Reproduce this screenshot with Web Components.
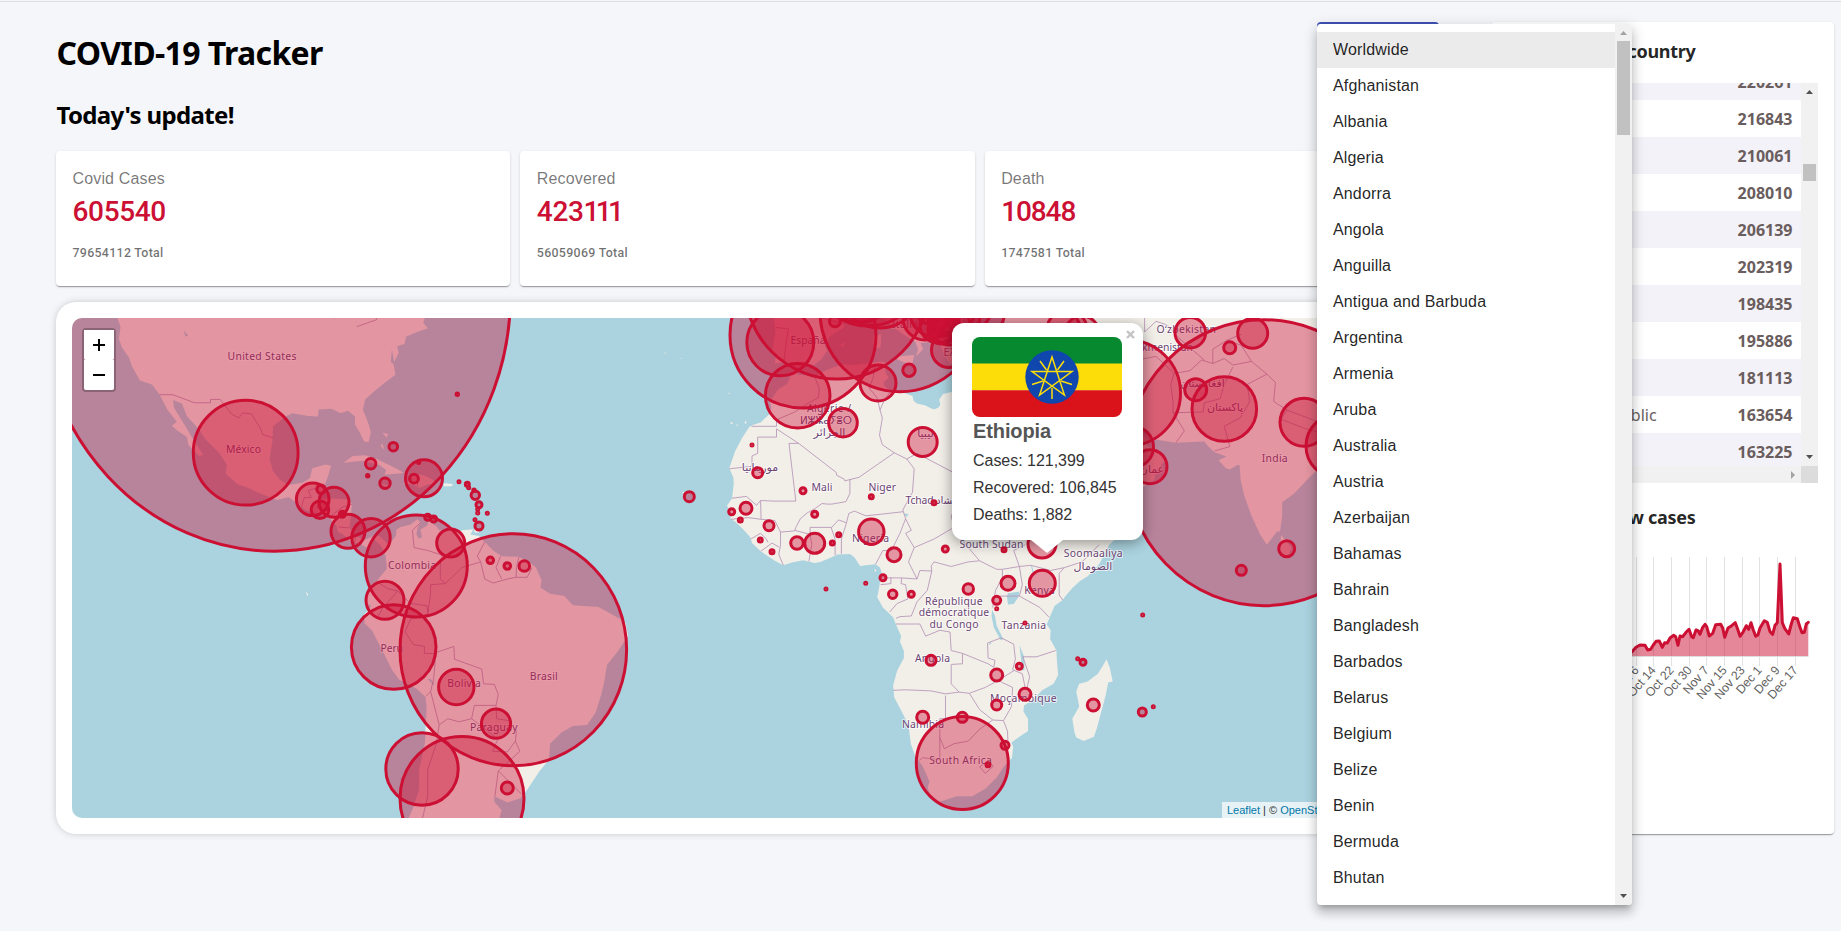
<!DOCTYPE html>
<html lang="en">
<head>
<meta charset="utf-8">
<title>COVID-19 Tracker</title>
<style>
html,body{margin:0;padding:0;height:100%;overflow:hidden}
body{background:#f5f6fa;font-family:"Noto Sans","Liberation Sans",sans-serif}
</style>
</head>
<body>
<covid-app></covid-app>
<script>
const define=(name,html,init)=>{
  const t=document.createElement('template');t.innerHTML=html;
  customElements.define(name,class extends HTMLElement{
    constructor(){super();this.attachShadow({mode:'open'}).append(t.content.cloneNode(true));}
    connectedCallback(){if(init&&!this.ready){this.ready=true;init(this,this.shadowRoot);}}
  });
};
// Web Mercator at zoom 3
const R=2048/360, K=1024/Math.PI;
const px=lon=>826+R*lon, py=lat=>590.4-K*Math.log(Math.tan(Math.PI/4+lat*Math.PI/360));
const path=(s,close)=>s.trim().split('|').map(seg=>'M'+seg.trim().split(/\s+/).map(p=>{const[a,b]=p.split(',').map(Number);return px(a).toFixed(1)+' '+py(b).toFixed(1)}).join('L')+(close?'Z':'')).join('');

const LAND=`-5.9,35.8 -5.3,35.9 -5,35.4 -3,35.3 -2,35.1 -1,35.7 0,36 1.5,36.5 3,36.9 5,36.8 7,37 9.8,37.3 11,37 10.3,36.5 10.6,35.5 11,35 10.1,34.3 10.3,33.7 11.2,33.2 12.3,32.8 13.3,32.9 15.2,32.3 15.4,31.6 16,31.2 17.5,30.9 18.3,30.5 19,30.3 19.8,30.6 20.1,31 19.9,31.8 20.6,32.6 22,32.9 23.2,32.3 25,31.6 34,31.3 35,12 51,11.8 50.8,9 49.8,8 48.9,6.2 48,4.6 46,2.5 44.6,1.6 43.4,.5 42.5,-.5 41.5,-1.8 40.2,-2.7 39.5,-4.3 38.8,-6 39.5,-7 39.4,-8.5 40.5,-10.5 40.6,-12.5 40.8,-14.7 40,-16.2 38,-17.3 36.5,-18.8 34.8,-19.8 34.7,-20.8 35.5,-22 35.5,-24 34,-24.9 32.6,-25.8 32.9,-26.5 32.7,-28.2 31.3,-29.5 30,-31.2 28,-32.9 25.7,-34 23,-34 20,-34.8 18.4,-34.3 17.9,-32.7 18.2,-31.8 17,-29.5 15.7,-28 14.9,-26 14.5,-23 13.4,-21 12,-18.5 11.8,-16.5 12.5,-14 13.7,-11.8 13.7,-10.6 13,-9 13.2,-8 12.3,-6 11.8,-4.7 10,-3 9,-1.2 9.3,.2 9.5,1.5 9.8,3 9.5,4 8.7,4.6 7,4.4 6,4.3 5,5.8 4.2,6.4 2,6.3 1,5.8 -1,5 -2,4.8 -4,5.3 -6,4.9 -7.5,4.4 -9,5.2 -11.4,6.8 -13,8.3 -13.3,9.3 -14.7,10.8 -16,12 -16.8,12.5 -16.7,13.5 -17.4,14.7 -16.5,16 -16.2,18.5 -16.3,19.5 -17,21 -16,23.7 -14.8,25.8 -13.5,27.6 -12.9,27.9 -11.5,28.3 -10,29.5 -9.6,30.5 -9.8,31.5 -8.5,33.2 -6.8,34.1
|-77.4,8.5 -76.8,8 -75.6,9.5 -75.5,10.6 -74.8,11.1 -73,11.5 -71.8,12.4 -71.3,11.8 -71.8,10.9 -72,9.8 -71.6,9.1 -71,9.3 -71.3,10.6 -70,11.4 -70,12.1 -68.5,11.2 -68,10.5 -66,10.5 -65,10.1 -64,10.5 -62,10.7 -62.5,9.8 -61,9.5 -60,8.5 -58.5,7 -57,6 -54,5.9 -52,4.8 -51,4 -50,1.8 -50.2,.5 -48.5,-.6 -46,-1 -44.5,-2.6 -42,-2.8 -40,-2.9 -38,-4 -36,-5.1 -35.2,-5.8 -34.8,-8 -36.5,-10.5 -38.5,-13 -39,-16 -39.5,-18 -40.5,-21 -42,-23 -44.5,-23.2 -46.5,-24.2 -48.5,-26 -48.7,-28.5 -50.3,-30.2 -52.5,-33 -53.8,-34.3 -56,-34.9 -58.3,-34 -58.3,-34.8 -57,-36 -57.7,-37.8 -57.7,-40 -74,-40 -73.3,-37 -72.5,-35.5 -71.5,-33 -71.5,-30 -70.5,-26 -70.2,-20 -70.4,-18.4 -72,-17 -75,-15.5 -76.3,-13.8 -77.2,-12 -78.5,-9.5 -79.8,-7 -81.1,-5.8 -81.2,-4.2 -80.3,-3.4 -80,-2.7 -80.9,-2.2 -80.8,-1 -80,.5 -79,1.5 -78.7,2 -77.2,3.8 -77.4,6 -77.9,7.2 -78.4,8 -79.5,9 -80.3,8.3 -80.5,7.4 -82,8.2 -83,8.3 -83.7,8.7 -85,9.9 -85.8,10.2 -86,11.2 -87.5,12.9 -89,13.3 -91.5,14 -93,15.2 -94.5,16.2 -96.5,15.7 -99,16.6 -101.8,17.8 -103.5,18.4 -105.5,20.1 -105.3,21.5 -106.5,23.3 -109,25.6 -110.5,27.5 -112.3,29.2 -113.2,31.2 -114.8,31.7 -114.6,30.5 -112.8,28 -111.5,26 -110.3,24.3 -109.5,23.2 -110.2,23 -112.1,24.8 -112.3,26 -114,27 -115,27.8 -114.1,28.4 -115.8,30.3 -117.1,32.5 -118.5,34 -120.6,34.6 -122,36.6 -122.5,37.8 -123.8,39.3 -124.3,40.4 -124,42 -124.5,43 -124,45 -70,45 -70.5,43.2 -70.8,42.5 -70,41.8 -71.5,41.4 -73.8,40.7 -74.1,39.7 -75.4,39.4 -75.1,38.5 -75.9,37.2 -76.3,38.9 -76.5,37.2 -76,36.9 -75.7,35.4 -77.5,34.3 -79,33.3 -81,31.8 -81.4,30.3 -80.5,28.3 -80,26.8 -80.4,25.2 -81.2,25.3 -82,26.8 -82.8,28 -82.8,29.2 -84,30.1 -85.3,29.7 -87,30.4 -89.2,30.3 -89.3,29.2 -91,29.3 -93.8,29.7 -95,29.2 -97.2,27.7 -97.3,25.5 -97.8,22.5 -97.2,20.5 -96,19.1 -94.5,18.2 -92,18.6 -90.7,19.4 -90.3,21 -88,21.6 -87,21.4 -87.6,19.5 -88.2,18 -88.9,15.9 -86,15.9 -84,15.8 -83.3,15 -83.6,12.5 -83.8,11 -82.5,9.4 -81,8.8 -79.9,9.4 -78.5,9.5
|-84.8,21.9 -83.2,23 -81,23.1 -79,22.5 -77,21.6 -75.6,21 -74.2,20.2 -77.6,19.9 -77.3,20.7 -78.5,21.5 -81.5,22.2|-74.3,18.5 -72.5,18.3 -71.5,17.7 -70,18.3 -68.4,18.5 -69.5,19.3 -71,19.9 -73.2,19.9 -72.6,19|-67.2,18.5 -65.6,18.4 -65.8,18 -67.2,18|-78.3,18.4 -76.3,18.1 -77,17.8|-78,25 -77.6,24 -78.3,24.6|-77,26.5 -77.2,25.9 -78,26.7|-61.8,10.7 -61,10.7 -61,10.1 -61.8,10.1
|49.3,-12 49.9,-13.5 50.4,-15.8 49.6,-16 49.2,-18 48.5,-20.5 47.6,-23.6 47.1,-24.9 45.3,-25.6 44,-25 43.7,-24.3 43.3,-22 44.5,-20 44,-17.5 44.5,-16.2 46,-15.8 47.8,-14.5 48.8,-12.9
|48,30 50,30 51.5,28 54,26.6 56.8,27 57.3,25.7 61.5,25.1 66.5,25.3 67.2,24.5 68.3,23.6 70.4,22.9 69,22.3 70.3,21 71,20.8 72.3,21.5 72.7,21.5 72.9,19 73.5,16.5 74.8,13 76.3,9.8 77.5,8 78.2,8.9 79.3,10.3 79.8,10.3 80.2,13 80.2,15.3 82.2,16.7 85,19.5 87,21.3 90,22 90,45 30,45 35,36
|56.3,26 56.5,24.5 58.6,23.6 59.8,22.5 58,20.5 57.7,19 55.2,17.6 52,16 45,13 43,12.7 35,28 35,31 48,30|80,9.7 81.8,7.5 81.4,6.4 80.8,6 79.8,7
|-9.2,43.2 -8.9,41.5 -9.4,38.8 -8.8,38 -9,37 -7,37.2 -6.3,36.6 -5.5,36 -4.3,36.7 -2,36.8 -.7,37.7 .2,38.8 -.3,39.6 .8,40.8 3.2,41.9 3.1,43.1 6,43 8,45 -9,45|10.3,43 12.3,41.7 14,40.8 15.7,40 16.2,38.9 15.8,38 17.1,39 16.6,39.8 18.4,40 16,41.9 14,42.8 13,45 9,45|12.5,38 15.5,38.2 15.1,36.7 12.5,37.6|8.4,39 9.6,39.2 9.7,41 8.3,40.8|8.6,42 9.4,43 9.4,41.5|2.4,39.6 3.3,39.9 3.1,39.3|15,44 19,42 19.5,40.5 21.7,36.8 24,38 24,45
|-25.1,17.1 -24.9,16.9 -25.3,16.8|-16.8,28.4 -16.3,28.2 -16.7,28|-15.7,28.1 -15.4,27.8 -15.7,27.8|-14.2,28.6 -13.9,28.2 -14.3,28.1|-17.2,32.8 -16.8,32.7 -17.1,32.6|-28.4,38.6 -28,38.4 -28.3,38.4|-25.6,37.8 -25.2,37.7 -25.6,37.7|8.5,3.7 8.9,3.6 8.6,3.2|-91.5,-.1 -91,-.7 -91.2,-1`;
const LAKES=`32,-.5 34,-.2 33.8,-1.2 33,-2.4 32,-2.5 31.8,-1|29.2,-3.4 29.7,-4.5 30,-6.2 31.2,-8.6 30.7,-8.7 29.5,-6.5 29.1,-4.5|34,-9.6 34.8,-11.5 34.9,-13.9 34.4,-13.9 34.3,-12|36,4.5 36.3,3.2 36.7,2.6 36.2,4.4|-88,44 -87,43.3 -86.4,43 -86.3,44|-70,-15.4 -69,-16.4 -68.8,-16.2 -69.5,-15.4|30.8,1.8 31.3,2.2 30.4,1.1|13.6,13.4 14.5,13.3 14.2,12.8|-112.9,41.5 -112.1,40.8 -112.6,40.7|28.9,-9 29.1,-9.3 28.6,-9.6`;
const BORDERS=`-13.1,27.7 -8.7,27.7 -8.7,28.7 -5.5,29.9 -3.6,31 -1.3,32.1 -1.2,33.5 -2,35.1|-17,20.9 -13,21.3 -13,23 -12,23.4 -12,26 -8.7,26 -8.7,27.3 -4.8,25 1.8,20.3 1.9,19.8 3.2,19.2 3.3,18.9 5.8,19.5 12,23.5|-4.8,25 -6.5,25 -5.3,15.5 -9.3,15.5 -11.5,15.6 -12.2,14.8 -14,16.3 -16.5,16|12,23.5 9.9,24.8 9.4,26.3 9.9,29 9.5,30.2 9,32 7.6,33.5 8.3,35 8.6,36.9|9.5,30.2 10.3,31.8 11.5,33.1|12,23.5 14.2,22.5 16,23.4 24,19.5|14.2,22.5 15.5,20.9 15.2,17 13.5,14 13.6,13.7 10,13.3 7,13 5,13.8 4,13.4 3.6,11.8|4.2,19.2 4.2,16.8 3.5,15.4 1,15 .2,15 -.7,15.1 -2,14.2 -3.3,13.5 -4.5,12.5 -5.3,11 -5.5,10.5 -2.8,9.8 -2.8,11 0,11 1,11 2.2,12.3 3.6,11.8 2.7,9 2.7,6.4|1.6,6.2 1.6,9 .9,11|-2.8,9.8 -2.5,8 -3,5.1|-7.5,4.4 -8.3,6.3 -8,8 -8,10.2 -5.5,10.4|-8.3,7.6 -9.5,8.3 -11.4,6.9|-13.2,9 -11.5,10 -10.5,9 -10.2,8.4|-16.7,12.4 -13.7,12.7 -11.4,12.4 -11.5,15.6|-11.4,12.4 -9,12.2 -8,10.2|8.7,4.6 10,7 11.5,7 13,10 14,12.5 13.6,13.7|14,12.5 15,10.5 14,10 15.5,7.5 14.5,5 16,2|15.5,7.5 19,9 22.5,11|24,19.5 24,16 22,13 22.5,11 24,8.7 27,5.2 25,5 22,4.2 19,5 18.5,4.3 18.6,3.4 16.5,3.5 16,2|18.6,3.4 17.8,0 16,-2 15,-4.5 13,-4.6 12.3,-4.9|9.8,2.2 13.3,2.2 13.2,1.2 14,1 14.4,-1.5 12.5,-2.3 11.2,-3.8|11.4,2.3 11.4,1.2 9.6,1|13.3,2.2 16,2|12.3,-5.9 16.5,-5.9 17.5,-8 20,-7 21.8,-7.3 22,-10.5 24,-11 24,-12.8 22,-12.9 22,-16.2 23.4,-17.6|24,-11 26,-11.8 28.5,-12.8 29.5,-13.4 29.7,-12.2 28.5,-11.8 28.4,-9.2 30.8,-8.3 33,-9.4|11.8,-17.3 14,-17.2 18.5,-17.4 21,-17.9 23.4,-17.6 25.2,-17.8|21,-18.2 21,-22 20,-22 20,-28.5 17,-28.2 16.4,-28.6|20,-25 20.8,-26.8 22.5,-26 25,-25.6 27,-23.7 29.3,-22.2 31.2,-22.3 31.9,-24 32,-26|25.2,-17.8 27,-20.5 29.3,-22.2|25.2,-17.8 28,-16.8 30.3,-15.6 33,-14|30.3,-15.6 31,-16 32.8,-16.8 32.6,-20 31.2,-22.3|33,-9.4 33.3,-12 32.8,-13.8 34.5,-14.5 35,-16.8 35.3,-17 35.8,-15 34.6,-11.6 37,-11.6 40.4,-10.5|31,2.3 29.8,0 29.3,-3|31,3.7 34,4.2 34.5,1 34,-1 37.6,-3 39.2,-4.7|30.5,-1 34,-1|34,4.2 36,4.4 39.5,3.5 41.9,4 41,3 41,-.8 41.6,-1.7|27,5.2 30,3.7 31,3.7 31,2.3|41.9,4 45,5 48,8|27,-29.6 28.5,-28.7 29.4,-29.5 28,-30.6 27,-29.6|34,4.2 33,7 35,8
|-71.3,11.8 -72.7,10.5 -72.4,7.5 -70,7 -67.5,6.2 -67.8,4.5 -67.8,2 -66.9,1.2 -69.5,1 -69.5,-.5 -70,-4.2|-78.8,1.4 -77,.3 -75.3,-.1 -73,-2.3 -70.1,-2.7 -70,-4.2 -73,-5 -74,-7.3 -72.5,-9.5 -70.6,-9.8 -70.6,-11 -69,-11 -68.7,-12.5 -69,-15.5 -69.5,-17.5 -70.3,-18.3|-80.3,-3.4 -79,-5 -78,-3.2 -75.3,-.1|-69,-11 -65.4,-9.8 -65.3,-12 -60.5,-13.7 -60.2,-16.2 -58.3,-16.3 -57.6,-18 -58,-19.8 -61.8,-19.8 -62.3,-22 -64.5,-22.5 -66.5,-22 -68,-23 -69.5,-17.5|-58,-19.8 -57.9,-22 -55.8,-22.3 -54.4,-24 -54.6,-25.6 -56,-27.3 -58.6,-27.2 -57.7,-25.3 -62.3,-22|-68,-23 -68.5,-26 -70,-30 -70,-34 -71.2,-38|-54.6,-25.6 -53.8,-27.2 -57.6,-30.2 -58.2,-34|-57.6,-30.2 -53.5,-33.7|-60,8.5 -61.3,6 -60.7,5 -64,4 -66.9,1.2|-60.7,5 -60,2 -58.5,1.3 -56,2 -54.5,2.3 -52.5,2.3 -51.7,4|-57.2,6 -58,4 -57,2|-54,5.8 -54.4,4 -54.5,2.3
|-117.1,32.5 -114.8,32.5 -111,31.3 -108.2,31.3 -108.2,31.8 -106.5,31.8 -104.5,29.6 -103.2,29 -102.5,29.8 -101,29.6 -99.5,27.5 -99,26.4 -97.2,25.9|-92.2,14.5 -91.7,16.1 -90.5,16.1 -91,17.3 -89.2,17.8 -88.2,18.4|-89.2,17.8 -89.2,15.9 -89.4,14.4 -87.5,13.8|-88.4,15.8 -89.4,14.4|-87,13 -85,14.5 -83.2,15|-85.7,11.1 -83.7,10.9|-82.9,8.3 -82.6,9.5|-82.5,42 -79,42.9 -79,43.3|-71.8,19.8 -71.8,18
|61.5,25.1 63,27 61,29.8 61,31.5 60.6,34 61.2,35.6 64,36 66,37.5 68,37 70,37.7 71.5,36.8 74.8,37.3 77.5,35.5 79,34.3 78.7,31.5 81,30.2 88,27.9|61,29.8 66.3,29.9 66.5,31.3 69.3,31.9 70,34 71.5,36.5|68.3,23.8 71,24.5 70,27.7 72.8,29 74.5,31.5 74,34 77.5,35.5|81,30.2 80,28.8 84,27.4 88,26.4|56,45 56,41.3 58,42.7 60,42.2 62,40.5 66.5,37.5|68,37 68,39 70.5,40.2 73,39.5 74.8,37.3|66.5,41 70.5,42.2 74,43|70.5,40.2 73,41|61.2,35.6 58,38 54,37.4|52,19 55,20 55.5,23 56,24|24,31.5 25,22
|-8.8,41.9 -6.6,41.7 -7,40 -7.4,37.2|-1.8,43.3 3.2,42.4|20,42 21,40 23,41`;

const BUBBLES=`274.5,295,236,256.2 245.7,452.7,52.4 312.7,499.3,16.3 321,489.3,4.2 320,509.7,8.8 334,502.3,15 342.3,514.3,3 348,531.3,17 371,537.7,19.2 370.7,463.7,5.2 393.3,446.7,4.3 367.7,475.7,1.2 385,483.3,5.2 424,478.3,18.5 414,478.7,4.4 457.3,394.3,1.2 418.7,462.5,1 459,481.7,1 467.3,484.3,2 468.7,487.7,1 474,490.3,1.2 475.3,495.3,4.2 479,504.7,3 477.7,509.3,1 477.7,513,1 487.3,513.3,1 475,519.7,1 479,526,4 427.7,517.3,3 433.7,519,3 450.7,543,14 416.3,566,51 490.3,560.3,3.3 507.3,566,3.3 524.3,566,5.3 385,600.3,19 393.7,647,42.3 513.3,649.7,113.3,116 456.3,687,17.7 496,723.7,14.6 422,769,36.2 462,798.5,62 507.3,788,6
803,335,73 780.3,342.3,33.5 837,287,92 900,311.7,80 868,270,56 860,285,37 880,286,42 835,321.3,5.5 878,383,18 909,370.3,6.2 797.7,395.7,32.3 843,422.7,14.3 922.7,442,14.5 949,350,17.5 925,318,22 935,312,25 938,325,18 945,322,14 930,310,14 950,325,20 942,330,14 958,300,36 975,310,30 1025,349,60 1067,330,20 1082,333,17 1127.5,393,53 1133,447,20.5 1150,466.7,17
752,445,1 757.7,472.7,5 803,490.7,3 871.3,496.7,2 934,502.7,2 689.3,496.7,5 746,508.3,6 731.7,511.7,3 740.3,520,2 769,525.7,5 760.3,540,2 772,551.7,2 797,543,6.3 814.7,543.3,10 832.3,543,2 838.7,534.7,2 814.7,514.3,3 871.3,531.7,12.7 894,554.7,7 945.3,549,3 883,577.7,3 865.7,583.3,1 826,589,1 892.7,594.3,4.2 911.3,594.3,3 968.3,589,5.2 931,660.3,5 922.7,717.3,6 962.3,717.3,5 962.3,763,46,46.5 988,764.7,2 1004,549.7,2 1008,583.3,7 1042.3,583.3,13 1042,544,14 996.7,600.3,4 996.7,608.7,1 1025,623,1 996.7,675,6 1019.3,666.3,3 996.7,705,5 1025,694.3,6 1005,745.3,4 1083,662.3,3 1077.7,658.7,1 1142.7,615,1 1093.3,705,6 1142.3,712,4 1153.3,706.7,1
1286.7,548.7,8 1241.3,570.3,5 1190.3,332.7,15.3 1252.7,333.3,15 1229.7,347.7,6 1195.7,389.7,11 1224.3,409,32.3 1304,422.3,24 1338,446,32 1264,462.7,138.8,143`;

const LABELS=[['United States',227.5,359.5,69],['México',226,452.7,35],['Colombia',388,568.5,48],['Perú',380.5,651.5,22.5],['Brasil',529.7,680,28],['Bolivia',447.3,687,33.5],['Paraguay',470,730.5,47.5],['España',790.5,344,35],['Italia',892,328,26],['Ελλάς',943.5,356,30],['Algérie /',807,411.5,44],['ⵍⵣⵣⴰⵢⴻⵔ',800,423.5,52],['الجزائر',816,436,27],['ليبيا',916,436.5,19],['موريتانيا',742,470.5,36],['Mali',811.5,490.5,21],['Niger',868.5,491,27.5],['Tchad تشاد',905.5,503.5,50],['Nigeria',852,541.5,37],['South Sudan',959.5,547.7,64],['Soomaaliya',1063.7,557,59],['الصومال',1075,569.5,36],['Kenya',1024.3,594,30.5],['Tanzania',1001.5,629,44.5],['République',925,604.5,57.5],['démocratique',918.7,616.3,70.5],['du Congo',929.5,628.3,49],['Angola',915,662,35],['Namibia',902,728,42],['South Africa',929.3,764.3,62.5],['Moçambique',990,702,66.5],['India',1261.7,461.7,26],['Oʻzbekistan',1156.5,333,59.5],['Türkmenistan',1126,351,67],['افغانستان',1182,387,41],['پاکستان',1207.5,411,35],['عمان',1142,472.5,20]];

define('world-map',`<style>:host{display:block;position:relative;height:500px;border-radius:10px;overflow:hidden;background:#aad3df}
svg{display:block;width:100%;height:100%}
text{font:10.4px "Noto Sans","DejaVu Sans",sans-serif;fill:#6b4474;stroke:rgba(255,255,255,.65);stroke-width:2;paint-order:stroke;stroke-linejoin:round}
.b{fill:#cc1034;fill-opacity:.4;stroke:#cc1034;stroke-width:3}
</style><svg viewBox="72 318 1351 500" preserveAspectRatio="xMinYMin slice"><g id="g"></g></svg><slot></slot>`,(el,r)=>{
  let h=`<path d="${path(LAND,1)}" fill="#f2efe9"/><path d="${path(LAKES,1)}" fill="#aad3df"/><path d="${path(BORDERS)}" fill="none" stroke="#b999b9" stroke-width=".9" stroke-linejoin="round"/>`;
  for(const[t,x,y,w]of LABELS){const ar=/[\u0600-\u06ff]/.test(t)&&!/[a-z]/.test(t);h+=ar?`<text x="${x+w/2}" y="${y}" text-anchor="middle" style="font-family:'DejaVu Sans';font-size:11px">${t}</text>`:`<text x="${x}" y="${y}" textLength="${w}">${t}</text>`;}
  for(const c of BUBBLES.trim().split(/\s+/)){const[x,y,a,b]=c.split(',');h+=`<ellipse class="b" cx="${x}" cy="${y}" rx="${a}" ry="${b||a}"/>`;}
  r.getElementById('g').innerHTML=h;
});
define('zoom-control',`<style>:host{position:absolute;left:10px;top:10px;display:block;width:30px;border:2px solid rgba(0,0,0,.25);border-radius:4px;background-clip:padding-box}
a{display:flex;align-items:center;justify-content:center;height:30px;background:#fff;border-radius:0 0 2px 2px}a:first-child{border-bottom:1px solid #ccc;border-radius:2px 2px 0 0}svg{display:block}</style>
<a><svg width="12" height="12"><path d="M0 6H12M6 0V12" stroke="#000" stroke-width="2"/></svg></a><a><svg width="12" height="12"><path d="M0 6H12" stroke="#000" stroke-width="2"/></svg></a>`);
define('map-credit',`<style>:host{position:absolute;right:0;bottom:0;width:196px;height:16px;line-height:16px;padding-left:5px;background:rgba(255,255,255,.7);font-family:"Liberation Sans",sans-serif;font-size:11px;color:#333;white-space:nowrap;overflow:hidden}b{font-weight:400;color:#0078a8}</style><b>Leaflet</b> | © <b>OpenStreetMap</b> contributors`);
define('country-popup',`<style>:host{position:absolute;left:880px;top:5px;width:191px;height:217px;font-family:"Liberation Sans",sans-serif;color:#333}
.box{position:relative;height:100%;box-sizing:border-box;padding:14px 20px;background:#fff;border-radius:12px;box-shadow:0 3px 14px rgba(0,0,0,.4)}
.tip{position:absolute;left:75px;top:100%;display:block}
.flag{display:block;border-radius:8px;overflow:hidden}
h4{margin:3px 0 0 1px;font:bold 20px/23px "Liberation Sans";letter-spacing:-.1px;color:#555}
p{margin:0 0 0 1px;font-size:16px;line-height:27px;letter-spacing:-.03px;white-space:nowrap}.x{position:absolute;right:8px;top:7px}</style>
<div class="box"><svg class="flag" width="150" height="80"><path fill="#078930" d="M0 0h150v27H0z"/><path fill="#fcdd09" d="M0 26.5h150v27H0z"/><path fill="#da121a" d="M0 53.3h150V80H0z"/><circle cx="80" cy="40" r="26.7" fill="#0f47af"/><g transform="translate(80 41)" fill="none" stroke="#fcdd09" stroke-width="1.5"><path d="M0-21L12.4 17L-20-6.5H20L-12.4 17Z"/><path d="M12-17L5.500-8M-12-17L-5.500-8M20 6.500L9 3M-20 6.500L-9 3M0 21V10"/></g></svg>
<h4>Ethiopia</h4><p style="margin-top:4px">Cases: 121,399</p><p>Recovered: 106,845</p><p>Deaths: 1,882</p>
<svg class="x" width="9" height="9"><path d="M1 1L8 8M8 1L1 8" stroke="#c3c3c3" stroke-width="2.4"/></svg></div>
<svg class="tip" width="40" height="14"><path d="M4 0H36L20 13Z" fill="#fff"/></svg>`);
define('info-box',`<style>:host{display:block;flex:1;box-sizing:border-box;height:135px;padding:16px 16px 0;background:#fff;border-radius:4px;box-shadow:0 2px 1px -1px rgba(0,0,0,.2),0 1px 1px rgba(0,0,0,.14),0 1px 3px rgba(0,0,0,.12)}
div{white-space:nowrap;padding-left:.5px}.t{font:16px/24px "Liberation Sans";letter-spacing:.15px;color:rgba(0,0,0,.54)}.n{font:500 28px/36px Roboto;letter-spacing:-.35px;color:#cc1034;margin-top:3px}.s{font:500 12.4px/18px Roboto;letter-spacing:.3px;color:rgba(0,0,0,.56);margin-top:14px}</style>
<div class="t"><slot name="title"></slot></div><div class="n"><slot name="today"></slot></div><div class="s"><slot name="total"></slot></div>`);
define('scroll-bar',`<style>:host{display:block;position:relative;width:17px;background:#f1f1f1}i{position:absolute;left:2px;width:13px;background:#c1c1c1}svg{position:absolute;left:5px}</style><svg class="u" style="top:7px" width="7" height="4"><path d="M0 4L3.500 0L7 4Z"/></svg><i></i><svg class="d" style="bottom:7px" width="7" height="4"><path d="M0 0H7L3.500 4Z"/></svg>`,(el,r)=>{
  const i=r.querySelector('i');i.style.top=el.getAttribute('from')+'px';i.style.height=el.getAttribute('size')+'px';
  r.querySelector('.u').style.fill=el.hasAttribute('start')?'#a3a3a3':'#505050';r.querySelector('.d').style.fill='#505050';
});
define('country-menu',`<style>:host{position:absolute;left:1317px;top:24px;width:315px;height:881px;display:flex;background:#fff;border-radius:4px;overflow:hidden;z-index:5;box-shadow:0 5px 5px -3px rgba(0,0,0,.2),0 8px 10px 1px rgba(0,0,0,.14),0 3px 14px 2px rgba(0,0,0,.12)}
ul{flex:1;margin:0;padding:8px 0;list-style:none;font:16px/36px "Liberation Sans";letter-spacing:.15px;color:rgba(0,0,0,.87)}li{height:36px;padding-left:16px;line-height:35px}li:first-child{background:#ebebeb}</style><ul></ul><scroll-bar start from="17" size="94"></scroll-bar>`,(el,r)=>{
  r.querySelector('ul').innerHTML='Worldwide,Afghanistan,Albania,Algeria,Andorra,Angola,Anguilla,Antigua and Barbuda,Argentina,Armenia,Aruba,Australia,Austria,Azerbaijan,Bahamas,Bahrain,Bangladesh,Barbados,Belarus,Belgium,Belize,Benin,Bermuda,Bhutan'.split(',').map(c=>`<li>${c}</li>`).join('');
});
define('cases-table',`<style>:host{display:grid;grid-template-columns:1fr 17px;grid-template-rows:383px 17px}
.rows{overflow:hidden;display:flex;flex-direction:column;justify-content:flex-start}.in{margin-top:-20px}.r{height:37px;box-sizing:border-box;display:flex;justify-content:space-between;padding:0 8.500px 0 0;font-size:16px;line-height:39px;color:#6a5d5d}.r:nth-child(odd){background:#f3f2f8}.r span{width:147px;text-align:right;white-space:nowrap}.r b{letter-spacing:0}
.h{background:#f1f1f1;display:flex;justify-content:flex-end;align-items:center;padding-right:6px}.c{background:#dcdcdc}</style>
<div class="rows"><div class="in"></div></div><scroll-bar from="81" size="17"></scroll-bar><div class="h"><svg width="4" height="8"><path d="M0 0L4 4L0 8Z" fill="#a3a3a3"/></svg></div><div class="c"></div>`,(el,r)=>{
  r.querySelector('.in').innerHTML='220261,216843,210061,208010,206139,202319,198435,195886,181113,163654,163225'.split(',').map(n=>`<div class="r"><span>${n==='163654'?'Dominican Republic':''}</span><b>${n}</b></div>`).join('');
});
define('line-graph',`<style>:host{display:block}svg{display:block;width:100%;height:170px}text{font:12.3px "Liberation Sans";fill:#5f5f5f}</style><svg viewBox="1507 547 311 170"></svg>`,(el,r)=>{
  const P='-60,768 -30,764 0,766 30,760 60,764 96,755 108,742 120,735 135,736 143,750 152,748 160,735 168,724 178,723 187,742 194,728 202,729 210,714 221,706 227,710 234,736 240,708 248,710 258,697 267,688 275,710 280,713 288,690 295,693 300,703 308,682 315,673 320,680 328,708 338,700 347,674 362,673 368,684 374,712 384,684 395,677 406,668 413,688 420,709 428,698 439,677 446,688 453,668 460,690 467,709 474,704 480,684 493,662 502,667 510,695 518,703 525,676 532,668 540,492 547,668 554,685 566,702 574,672 580,653 592,656 600,682 606,698 613,697 619,672 625,667'.split(' ').map(p=>{const[a,b]=p.split(',');return(1600+a/3).toFixed(1)+' '+(400+b/3).toFixed(1)}).join('L');
  let h='';[[109,'Oct 6'],[160,'Oct 14'],[214,'Oct 22'],[268,'Oct 30'],[319,'Nov 7'],[373,'Nov 15'],[427,'Nov 23'],[478,'Dec 1'],[532,'Dec 9'],[586,'Dec 17']].forEach(([a,t])=>{const x=Math.floor(1600+a/3)+.5;h+=`<path d="M${x} 557V666" stroke="#e2e2e2"/><text text-anchor="end" transform="translate(${x+3} 670.5) rotate(-49)">${t}</text>`;});
  h+=`<path d="M1580 656.500H1808.500" stroke="#dcdcdc" fill="none"/><path d="M${P}V656H1580Z" fill="#cc1034" fill-opacity=".5"/><path d="M${P}" fill="none" stroke="#cc1034" stroke-width="3" stroke-linejoin="round" stroke-linecap="round"/>`;
  r.querySelector('svg').innerHTML=h;
});
define('side-panel',`<style>:host{display:block;box-sizing:border-box;width:343px;height:812px;padding:0 16px;background:#fff;border-radius:4px;box-shadow:0 2px 1px -1px rgba(0,0,0,.2),0 1px 1px rgba(0,0,0,.14),0 1px 3px rgba(0,0,0,.12)}
h3{margin:0;width:188.500px;text-align:right;font-size:18px;line-height:26px;white-space:nowrap;color:rgba(0,0,0,.87);letter-spacing:-.3px}h3.a{padding-top:16px;margin-bottom:19px}h3.b{margin:20.500px 0 17.500px}</style>
<h3 class="a">Live Cases by country</h3><cases-table></cases-table><h3 class="b">Worldwide new cases</h3><line-graph></line-graph>`);
define('covid-app',`<style>:host{display:flex;align-items:flex-start;position:relative;box-sizing:border-box;height:931px;padding-left:56px;overflow:hidden}
:host::before{content:"";position:absolute;left:0;right:0;top:1px;height:1px;background:#dcdddf}
.left{width:1383px;flex:none}.head{display:flex;justify-content:space-between;height:78px}h1{margin:30.500px 0 0 .5px;font-size:32px;line-height:44px;letter-spacing:-.62px}
.sel{box-sizing:border-box;width:122px;height:56px;margin-top:22px;border:2px solid #3f51b5;border-radius:4px;background:#fff}
h2{margin:20.500px 0 20.500px .5px;font-size:24px;line-height:32px;letter-spacing:-.66px}.stats{display:flex;gap:10px}
.one{letter-spacing:-3.7px}.narrow{letter-spacing:-1.1px}
.map{box-sizing:border-box;margin-top:16px;height:532px;padding:16px;border-radius:20px;background:#fff;box-shadow:0 0 8px -2px rgba(0,0,0,.3)}
side-panel{margin:22px 0 0 52px;flex:none}</style>
<div class="left"><div class="head"><h1>COVID-19 Tracker</h1><div class="sel"></div></div><h2>Today's update!</h2>
<div class="stats"><info-box><span slot="title">Covid Cases</span><span slot="today">605540</span><span slot="total">79654112 Total</span></info-box>
<info-box><span slot="title">Recovered</span><span slot="today">423<span class="one">111</span></span><span slot="total">56059069 Total</span></info-box>
<info-box><span slot="title">Death</span><span slot="today" class="narrow">10848</span><span slot="total">1747581 Total</span></info-box></div>
<div class="map"><world-map><zoom-control></zoom-control><map-credit></map-credit><country-popup></country-popup></world-map></div></div>
<side-panel></side-panel><country-menu></country-menu>`);
</script>
</body>
</html>
